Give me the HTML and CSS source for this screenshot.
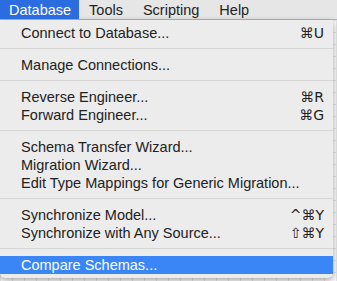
FILE: index.html
```html
<!DOCTYPE html>
<html lang="en">
<head>
    <meta charset="UTF-8">
    <meta name="viewport" content="width=device-width, initial-scale=1.0">
    <title>Database Menu</title>
    <link rel="stylesheet" href="styles.css">
</head>
<body>
    <div class="menubar">
        <span class="menubar-item active">Database</span>
        <span class="menubar-item">Tools</span>
        <span class="menubar-item">Scripting</span>
        <span class="menubar-item">Help</span>
    </div>

    <div class="workspace">
        <ul class="menu">
            <li class="menu-item"><span>Connect to Database...</span><span class="key">&#8984;U</span></li>
            <li class="separator"></li>
            <li class="menu-item"><span>Manage Connections...</span></li>
            <li class="separator"></li>
            <li class="menu-item"><span>Reverse Engineer...</span><span class="key">&#8984;R</span></li>
            <li class="menu-item"><span>Forward Engineer...</span><span class="key">&#8984;G</span></li>
            <li class="separator"></li>
            <li class="menu-item"><span>Schema Transfer Wizard...</span></li>
            <li class="menu-item"><span>Migration Wizard...</span></li>
            <li class="menu-item"><span>Edit Type Mappings for Generic Migration...</span></li>
            <li class="separator"></li>
            <li class="menu-item"><span>Synchronize Model...</span><span class="key">^&#8984;Y</span></li>
            <li class="menu-item"><span>Synchronize with Any Source...</span><span class="key">&#8679;&#8984;Y</span></li>
            <li class="separator"></li>
            <li class="menu-item selected"><span>Compare Schemas...</span></li>
        </ul>
    </div>
</body>
</html>
```

FILE: styles.css
```css
body {
    margin: 0;
    padding: 0;
    font-family: "Liberation Sans", Arial, sans-serif;
    font-size: 14.5px;
    color: #222;
    width: 337px;
    height: 281px;
    overflow: hidden;
    background-color: #fff;
}

.menubar {
    display: flex;
    height: 20px;
    background-color: #e6e6e6;
    border-bottom: 1px solid #b5b5b5;
    box-sizing: border-box;
}

.menubar-item {
    padding: 0 10px;
    line-height: 20px;
}

.menubar-item.active {
    padding: 0 8px 0 9px;
    background-color: #2b6ce0;
    color: #fff;
}

.workspace {
    height: 261px;
    background-color: #fafafa;
    background-image: linear-gradient(90deg, #e4e4e4 1px, transparent 1px),
        linear-gradient(#e4e4e4 1px, transparent 1px);
    background-size: 12px 12px;
}

.menu {
    list-style-type: none;
    margin: 0;
    padding: 4px 0 4px 0;
    width: 333px;
    background-color: #ececec;
    border-radius: 0 0 5px 5px;
    box-shadow: 0 2px 6px rgba(0, 0, 0, 0.35);
}

.menu-item {
    display: flex;
    justify-content: space-between;
    height: 18px;
    line-height: 18px;
    padding: 0 9px 0 21px;
}

.menu-item .key {
    font-family: "DejaVu Sans", sans-serif;
    font-size: 14px;
}

.menu-item.selected {
    background-color: #3a86f7;
    color: #fff;
}

.separator {
    height: 1px;
    margin: 6px 0 7px 0;
    background-color: #d6d6d6;
}
```
